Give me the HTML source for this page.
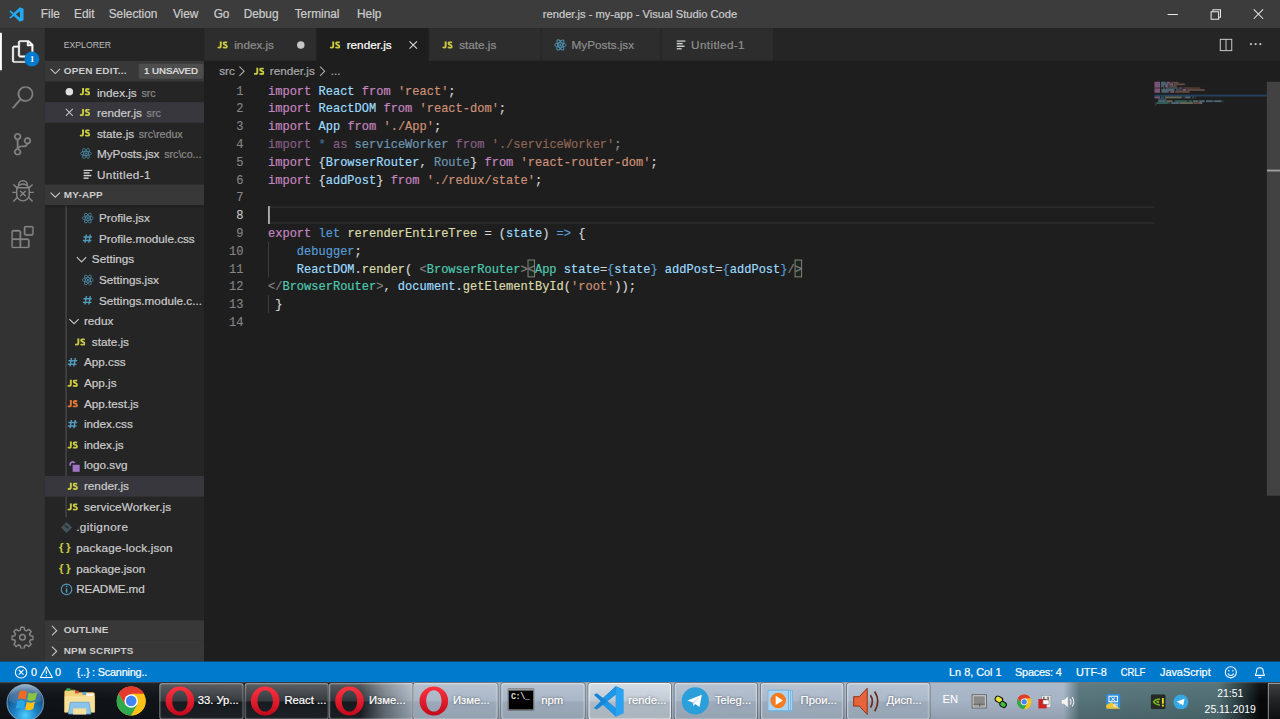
<!DOCTYPE html>
<html>
<head>
<meta charset="utf-8">
<title>render.js - my-app - Visual Studio Code</title>
<style>
*{box-sizing:border-box;margin:0;padding:0}
html,body{width:1280px;height:719px;overflow:hidden;background:#1e1e1e;font-family:"Liberation Sans",sans-serif}
body{font-family:"Liberation Sans",sans-serif;}
#root{position:absolute;left:0;top:0;width:1366px;height:768px;transform-origin:0 0;transform:scale(0.93704);background:#1e1e1e;color:#ccc;font-size:13px;overflow:hidden}
.abs{position:absolute}
/* title bar */
#title{position:absolute;left:0;top:0;width:1366px;height:30px;background:#3c3c3c;color:#ccc}
#title .m{position:absolute;top:0;height:30px;line-height:30px;font-size:12.65px;white-space:nowrap}
#wtitle{position:absolute;left:0;width:1366px;text-align:center;top:0;height:30px;line-height:30px;font-size:11.9px;white-space:nowrap}
/* activity bar */
#act{position:absolute;left:0;top:30px;width:48px;height:676px;background:#333}
#act svg{position:absolute;left:12px}
/* sidebar */
#side{position:absolute;left:48px;top:30px;width:170px;height:676px;background:#252526;overflow:hidden}
.hdr{position:absolute;left:0;width:170px;height:22px;background:#383838;color:#ccc;font-weight:bold;font-size:10.6px;letter-spacing:.2px;line-height:20.8px;white-space:nowrap}
.row{position:absolute;left:0;width:170px;height:22px;line-height:22px;font-size:12.5px;color:#ccc;white-space:nowrap;overflow:hidden}
.row .t{position:absolute;top:.8px}
.row .d{font-size:11.4px;color:#8b8b8b;margin-left:5px}
.sel{background:#37373d}
.ic{position:absolute;top:3px;width:16px;height:16px}
.jsi{position:absolute;top:7.3px}
.tab .jsi{top:13.8px}
.hash{position:absolute;top:-.5px;font-size:15.5px;font-weight:bold;font-style:italic;color:#519aba;margin-left:-1px}
.br{position:absolute;top:-1px;font-size:12.5px;font-weight:bold;color:#cbcb41;letter-spacing:2.6px}
/* editor */
#tabs{position:absolute;left:218px;top:30px;width:1148px;height:35px;background:#252526}
.tab{position:absolute;top:0;height:35px;width:120px;background:#2d2d2d;border-right:1px solid #252526;color:#8f8f8f;font-size:12.5px;line-height:36.6px;white-space:nowrap}
.tab.on{background:#1e1e1e;color:#fff}
.tab .t{position:absolute;left:32px;top:0}
#crumbs{position:absolute;left:218px;top:65px;width:1148px;height:22px;background:#1e1e1e;color:#a9a9a9;font-size:12.5px;line-height:22px;white-space:nowrap}
#ed{position:absolute;left:218px;top:87px;width:1148px;height:619px;background:#1e1e1e;overflow:hidden}
.ln{position:absolute;left:0;width:41.8px;margin-top:.7px;text-align:right;height:19px;line-height:19px;-webkit-text-stroke:.15px currentColor;font-family:"Liberation Mono",monospace;font-size:12.83px;color:#858585}
.cl{position:absolute;left:68px;margin-top:.7px;height:19px;line-height:19px;-webkit-text-stroke:.2px currentColor;font-family:"Liberation Mono",monospace;font-size:12.83px;color:#d4d4d4;white-space:pre}
.k{color:#c586c0}.v{color:#9cdcfe}.s{color:#ce9178}.b{color:#569cd6}.f{color:#dcdcaa}.g{color:#4ec9b0}.p{color:#808080}
/* status */
#status{position:absolute;left:0;top:706px;width:1366px;height:22px;background:#007acc;color:#fff;font-size:11.6px;line-height:22px;white-space:nowrap}
#status .t{position:absolute;top:0}
/* taskbar */
#task{position:absolute;left:0;top:728px;width:1366px;height:40px;background:#1a1f26;overflow:hidden}
.tb{position:absolute;top:1px;height:39px;border-radius:3px;border:1px solid rgba(255,255,255,0.45);box-shadow:inset 0 0 0 1px rgba(255,255,255,0.12), 0 0 0 1px rgba(0,0,0,0.38)}
.tb.dk{background:linear-gradient(180deg,rgba(255,255,255,.27) 0,rgba(255,255,255,.17) 48%,rgba(255,255,255,.03) 52%,rgba(255,255,255,.06) 100%)}
.tb.dk2{background:linear-gradient(180deg,rgba(255,255,255,.25) 0,rgba(255,255,255,.14) 48%,rgba(255,255,255,.02) 52%,rgba(255,255,255,.05) 100%)}
.tb.lt{background:linear-gradient(180deg,rgba(255,255,255,.16) 0,rgba(255,255,255,.07) 48%,rgba(0,0,0,.03) 52%,rgba(255,255,255,.04) 100%)}
.tb.ac{background:linear-gradient(180deg,rgba(255,255,255,.5) 0,rgba(255,255,255,.33) 48%,rgba(225,225,215,.2) 52%,rgba(235,235,225,.3) 100%);border-color:rgba(255,255,255,.8)}
.tl{position:absolute;top:0;height:40px;line-height:38px;color:#fff;font-size:12px;white-space:nowrap;text-shadow:0 0 3px rgba(0,0,0,0.6)}
.row .t,.tab .t,#crumbs span,#title .m,#wtitle,#status .t,.tl{-webkit-text-stroke:.22px currentColor}
</style>
</head>
<body>
<div id="root">
<div id="title">
<svg class="abs" style="left:9px;top:6.5px" width="17" height="17" viewBox="0 0 100 100"><path d="M72 4L95 14V86L72 96L33 60L14 75L5 70L26 50L5 30L14 25L33 40ZM72 29L46 50L72 71Z" fill="#23a9f2" fill-rule="evenodd"/></svg>
<span class="m" style="left:43.5px">File</span>
<span class="m" style="left:79px">Edit</span>
<span class="m" style="left:116px">Selection</span>
<span class="m" style="left:184.5px">View</span>
<span class="m" style="left:228px">Go</span>
<span class="m" style="left:260px">Debug</span>
<span class="m" style="left:314.5px">Terminal</span>
<span class="m" style="left:381px">Help</span>
<div id="wtitle">render.js - my-app - Visual Studio Code</div>
<svg class="abs" style="left:1228px;top:0" width="138" height="30" viewBox="0 0 138 30" fill="none" stroke="#e8e8e8" stroke-width="1.1">
<path d="M18 15.5 H29"/>
<path d="M64.5 12.5 H72.5 V20.5 H64.5 Z"/><path d="M66.5 12.5 V10.5 H74.5 V18.5 H72.5"/>
<path d="M110 10 L120 20 M120 10 L110 20"/>
</svg>
</div>
<div id="act">
<div class="abs" style="left:0;top:5px;width:2px;height:40px;background:#fff"></div>
<svg style="top:12.5px;left:11.5px" width="25.5" height="24" preserveAspectRatio="none" viewBox="0 0 24 24" fill="#fff" stroke="#fff" stroke-width=".55"><path d="M17.5 0h-9L7 1.5V6H2.5L1 7.5v15.07L2.5 24h12.07L16 22.57V18h4.7l1.3-1.43V4.5L17.5 0zm0 2.12l2.38 2.38H17.5V2.12zm-3 20.38h-12v-15H7v9.07L8.5 18h6v4.5zm6-6h-12v-15H16V6h4.5v10.5z"/></svg>
<div class="abs" style="left:26.4px;top:24.8px;width:16px;height:16px;border-radius:8px;background:#007acc;color:#fff;font-size:9px;font-weight:bold;text-align:center;line-height:16px;font-family:'Liberation Serif',serif">1</div>
<svg style="top:62.3px" width="24" height="24" viewBox="0 0 24 24" fill="#858585" stroke="#858585" stroke-width=".4"><path d="M15.25 0a8.25 8.25 0 0 0-6.18 13.72L1 22.88l1.12 1.12 8.05-9.12A8.251 8.251 0 1 0 15.25.01V0zm0 15a6.75 6.75 0 1 1 0-13.5 6.75 6.75 0 0 1 0 13.5z"/></svg>
<svg style="top:111.8px" width="24" height="24" viewBox="0 0 24 24" fill="#858585" stroke="#858585" stroke-width=".4"><path d="M21.007 8.222A3.738 3.738 0 0 0 15.045 5.2a3.737 3.737 0 0 0 1.156 6.583 2.988 2.988 0 0 1-2.668 1.67h-2.99a4.456 4.456 0 0 0-2.989 1.165V7.4a3.737 3.737 0 1 0-1.494 0v9.117a3.776 3.776 0 1 0 1.816.099 2.99 2.99 0 0 1 2.668-1.667h2.99a4.484 4.484 0 0 0 4.223-3.039 3.736 3.736 0 0 0 3.25-3.687zM4.565 3.738a2.242 2.242 0 1 1 4.484 0 2.242 2.242 0 0 1-4.484 0zm4.484 16.441a2.242 2.242 0 1 1-4.484 0 2.242 2.242 0 0 1 4.484 0zm8.221-9.715a2.242 2.242 0 1 1 0-4.485 2.242 2.242 0 0 1 0 4.485z"/></svg>
<svg style="top:158.5px;left:9.5px" width="29" height="29" viewBox="0 0 24 24" fill="none" stroke="#858585" stroke-width="1.3"><path d="M6.5 11.5a5.5 5.5 0 0 1 11 0v4a5.5 5.5 0 0 1-11 0z"/><path d="M8 7.2A4 4 0 0 1 16 7.2"/><path d="M6.5 9.5H17.5"/><path d="M9.5 12L14.5 17M14.5 12L9.5 17"/><path d="M6.5 13.5H2.5M17.5 13.5H21.5M6.8 9.5L3.5 6.5M17.2 9.5L20.5 6.5M7 18L3.5 21.5M17 18L20.5 21.5"/></svg>
<svg style="top:211.3px" width="24" height="24" viewBox="0 0 24 24" fill="#858585" stroke="#858585" stroke-width=".4"><path d="M13.5 1.5L15 0h7.5L24 1.5V9l-1.5 1.5H15L13.5 9V1.5zm1.5 0V9h7.5V1.5H15zM0 15V6l1.5-1.5H9L10.5 6v7.5H18l1.5 1.5v7.5L18 24H1.5L0 22.5V15zm9-1.5V6H1.5v7.5H9zM9 15H1.5v7.5H9V15zm1.5 7.5H18V15h-7.5v7.5z"/></svg>
<svg style="top:638px" width="24" height="24" viewBox="0 0 24 24" fill="none" stroke="#858585" stroke-width="1.6" stroke-linejoin="round"><circle cx="12" cy="12" r="3"/><path d="M10.3 1.5h3.4l.6 3 1.9.8 2.6-1.7 2.4 2.4-1.7 2.6.8 1.9 3 .6v3.4l-3 .6-.8 1.9 1.7 2.6-2.4 2.4-2.6-1.7-1.9.8-.6 3h-3.4l-.6-3-1.9-.8-2.6 1.7-2.4-2.4 1.7-2.6-.8-1.9-3-.6v-3.4l3-.6.8-1.9-1.7-2.6 2.4-2.4 2.6 1.7 1.9-.8z"/></svg>
</div>
<div id="side">
<div class="abs" style="left:20px;top:0;height:35px;line-height:35px;font-size:10.6px;color:#bbb;transform-origin:0 0;transform:scaleX(.875)">EXPLORER</div>
<div class="hdr" style="top:35px"><svg class="ic" style="left:3px" viewBox="0 0 16 16" fill="none" stroke="#c5c5c5" stroke-width="1.2"><path d="M3 5.5L8 10.5L13 5.5"/></svg><span class="abs" style="left:20px">OPEN EDIT...</span><span class="abs" style="left:100px;top:3px;width:69px;height:16px;line-height:16px;background:#4d4d4d;color:#e8e8e8;border-radius:2px;text-align:center;font-size:10.3px;font-weight:normal;letter-spacing:0;-webkit-text-stroke:.25px currentColor">1 UNSAVED</span></div>
<div class="row" style="top:57px"><div class="abs" style="left:22px;top:7px;width:8px;height:8px;border-radius:4px;background:#e0e0e0"></div><svg class="jsi" style="left:37.4px" width="11" height="7.9" preserveAspectRatio="none" viewBox="0 0 11 8.5" fill="none" stroke="#cbcb41" stroke-width="2.05"><path d="M3.6 0V5.5Q3.6 7.4 1.9 7.4Q.9 7.4 .1 6.9"/><path d="M10.5 1.4Q9.3 1 8.3 1Q6.6 1 6.600000 2.4Q6.6 3.5 8.4 4.1Q10.3 4.7 10.3 6Q10.3 7.5 8.3 7.5Q7 7.5 5.9 6.9"/></svg><span class="t" style="left:55.5px">index.js<span class="d">src</span></span></div>
<div class="row sel" style="top:79px"><svg class="ic" style="left:18px" viewBox="0 0 16 16" fill="none" stroke="#c5c5c5" stroke-width="1.1"><path d="M4.300000 4.3L11.700000 11.7M11.7 4.3L4.3 11.7"/></svg><svg class="jsi" style="left:37.4px" width="11" height="7.9" preserveAspectRatio="none" viewBox="0 0 11 8.5" fill="none" stroke="#cbcb41" stroke-width="2.05"><path d="M3.6 0V5.5Q3.6 7.4 1.9 7.4Q.9 7.4 .1 6.9"/><path d="M10.5 1.4Q9.3 1 8.3 1Q6.6 1 6.600000 2.4Q6.6 3.5 8.4 4.1Q10.3 4.7 10.3 6Q10.3 7.5 8.3 7.5Q7 7.5 5.9 6.9"/></svg><span class="t" style="left:55.5px">render.js<span class="d">src</span></span></div>
<div class="row" style="top:101px"><svg class="jsi" style="left:37.4px" width="11" height="7.9" preserveAspectRatio="none" viewBox="0 0 11 8.5" fill="none" stroke="#cbcb41" stroke-width="2.05"><path d="M3.6 0V5.5Q3.6 7.4 1.9 7.4Q.9 7.4 .1 6.9"/><path d="M10.5 1.4Q9.3 1 8.3 1Q6.6 1 6.600000 2.4Q6.6 3.5 8.4 4.1Q10.3 4.7 10.3 6Q10.3 7.5 8.3 7.5Q7 7.5 5.9 6.9"/></svg><span class="t" style="left:55.5px">state.js<span class="d">src\redux</span></span></div>
<div class="row" style="top:123px"><svg class="ic" style="left:36.8px;top:4.3px;width:13.5px;height:13.5px;opacity:.88" viewBox="0 0 16 16" fill="none" stroke="#519aba" stroke-width="1"><ellipse cx="8" cy="8" rx="7" ry="2.7"/><ellipse cx="8" cy="8" rx="7" ry="2.7" transform="rotate(60 8 8)"/><ellipse cx="8" cy="8" rx="7" ry="2.7" transform="rotate(120 8 8)"/><circle cx="8" cy="8" r="1.3" fill="#519aba" stroke="none"/></svg><span class="t" style="left:55.5px">MyPosts.jsx<span class="d">src\co...</span></span></div>
<div class="row" style="top:145px"><svg class="abs" style="left:41px;top:6px" width="10" height="10" viewBox="0 0 10 10" fill="#d4d7d6"><rect x="0" y="0" width="9.5" height="1.5"/><rect x="0" y="2.8" width="6.5" height="1.5"/><rect x="0" y="5.6" width="8.5" height="1.5"/><rect x="0" y="8.4" width="5.5" height="1.5"/></svg><span class="t" style="left:55.5px;letter-spacing:.4px">Untitled-1</span></div>
<div class="hdr" style="top:167px;z-index:2;box-shadow:0 3px 3px -1px rgba(0,0,0,0.45)"><svg class="ic" style="left:3px" viewBox="0 0 16 16" fill="none" stroke="#c5c5c5" stroke-width="1.2"><path d="M3 5.5L8 10.5L13 5.5"/></svg><span class="abs" style="left:20px">MY-APP</span></div>
<div class="abs" style="left:0;top:189px;width:170px;height:440px;overflow:hidden">
<div class="abs" style="left:22px;top:0;width:1px;height:332.6px;background:#585858"></div>
<div class="row" style="top:2.6px"><svg class="ic" style="left:38.7px;top:4.3px;width:13.5px;height:13.5px;opacity:.88" viewBox="0 0 16 16" fill="none" stroke="#519aba" stroke-width="1"><ellipse cx="8" cy="8" rx="7" ry="2.7"/><ellipse cx="8" cy="8" rx="7" ry="2.7" transform="rotate(60 8 8)"/><ellipse cx="8" cy="8" rx="7" ry="2.7" transform="rotate(120 8 8)"/><circle cx="8" cy="8" r="1.3" fill="#519aba" stroke="none"/></svg><span class="t" style="left:57.7px">Profile.jsx</span></div>
<div class="row" style="top:24.6px"><svg class="abs" style="left:39.5px;top:6.3px" width="10.5" height="9.6" viewBox="0 0 10.5 9.6" fill="none" stroke="#519aba" stroke-width="1.55"><path d="M4.300000 0L2.6 9.6M8.4 0L6.7 9.6M1 2.9H10.4M.2 6.700000H9.600000"/></svg><span class="t" style="left:57.7px">Profile.module.css</span></div>
<div class="row" style="top:46.6px"><svg class="ic" style="left:31.2px" viewBox="0 0 16 16" fill="none" stroke="#c5c5c5" stroke-width="1.2"><path d="M3 5.5L8 10.5L13 5.5"/></svg><span class="t" style="left:50px">Settings</span></div>
<div class="row" style="top:68.6px"><svg class="ic" style="left:38.7px;top:4.3px;width:13.5px;height:13.5px;opacity:.88" viewBox="0 0 16 16" fill="none" stroke="#519aba" stroke-width="1"><ellipse cx="8" cy="8" rx="7" ry="2.7"/><ellipse cx="8" cy="8" rx="7" ry="2.7" transform="rotate(60 8 8)"/><ellipse cx="8" cy="8" rx="7" ry="2.7" transform="rotate(120 8 8)"/><circle cx="8" cy="8" r="1.3" fill="#519aba" stroke="none"/></svg><span class="t" style="left:57.7px">Settings.jsx</span></div>
<div class="row" style="top:90.6px"><svg class="abs" style="left:39.5px;top:6.3px" width="10.5" height="9.6" viewBox="0 0 10.5 9.6" fill="none" stroke="#519aba" stroke-width="1.55"><path d="M4.300000 0L2.6 9.6M8.4 0L6.7 9.6M1 2.9H10.4M.2 6.700000H9.600000"/></svg><span class="t" style="left:57.7px">Settings.module.c...</span></div>
<div class="row" style="top:112.6px"><svg class="ic" style="left:22.5px" viewBox="0 0 16 16" fill="none" stroke="#c5c5c5" stroke-width="1.2"><path d="M3 5.5L8 10.5L13 5.5"/></svg><span class="t" style="left:41.6px">redux</span></div>
<div class="row" style="top:134.6px"><svg class="jsi" style="left:32px" width="11" height="7.9" preserveAspectRatio="none" viewBox="0 0 11 8.5" fill="none" stroke="#cbcb41" stroke-width="2.05"><path d="M3.6 0V5.5Q3.6 7.4 1.9 7.4Q.9 7.4 .1 6.9"/><path d="M10.5 1.4Q9.3 1 8.3 1Q6.6 1 6.600000 2.4Q6.6 3.5 8.4 4.1Q10.3 4.7 10.3 6Q10.3 7.5 8.3 7.5Q7 7.5 5.9 6.9"/></svg><span class="t" style="left:50px">state.js</span></div>
<div class="row" style="top:156.6px"><svg class="abs" style="left:24.0px;top:6.3px" width="10.5" height="9.6" viewBox="0 0 10.5 9.6" fill="none" stroke="#519aba" stroke-width="1.55"><path d="M4.300000 0L2.6 9.6M8.4 0L6.7 9.6M1 2.9H10.4M.2 6.700000H9.600000"/></svg><span class="t" style="left:41.6px">App.css</span></div>
<div class="row" style="top:178.6px"><svg class="jsi" style="left:23.6px" width="11" height="7.9" preserveAspectRatio="none" viewBox="0 0 11 8.5" fill="none" stroke="#cbcb41" stroke-width="2.05"><path d="M3.6 0V5.5Q3.6 7.4 1.9 7.4Q.9 7.4 .1 6.9"/><path d="M10.5 1.4Q9.3 1 8.3 1Q6.6 1 6.600000 2.4Q6.6 3.5 8.4 4.1Q10.3 4.7 10.3 6Q10.3 7.5 8.3 7.5Q7 7.5 5.9 6.9"/></svg><span class="t" style="left:41.6px">App.js</span></div>
<div class="row" style="top:200.6px"><svg class="jsi" style="left:23.6px" width="11" height="7.9" preserveAspectRatio="none" viewBox="0 0 11 8.5" fill="none" stroke="#e37933" stroke-width="2.05"><path d="M3.6 0V5.5Q3.6 7.4 1.9 7.4Q.9 7.4 .1 6.9"/><path d="M10.5 1.4Q9.3 1 8.3 1Q6.6 1 6.600000 2.4Q6.6 3.5 8.4 4.1Q10.3 4.7 10.3 6Q10.3 7.5 8.3 7.5Q7 7.5 5.9 6.9"/></svg><span class="t" style="left:41.6px">App.test.js</span></div>
<div class="row" style="top:222.6px"><svg class="abs" style="left:24.0px;top:6.3px" width="10.5" height="9.6" viewBox="0 0 10.5 9.6" fill="none" stroke="#519aba" stroke-width="1.55"><path d="M4.300000 0L2.6 9.6M8.4 0L6.7 9.6M1 2.9H10.4M.2 6.700000H9.600000"/></svg><span class="t" style="left:41.6px">index.css</span></div>
<div class="row" style="top:244.6px"><svg class="jsi" style="left:23.6px" width="11" height="7.9" preserveAspectRatio="none" viewBox="0 0 11 8.5" fill="none" stroke="#cbcb41" stroke-width="2.05"><path d="M3.6 0V5.5Q3.6 7.4 1.9 7.4Q.9 7.4 .1 6.9"/><path d="M10.5 1.4Q9.3 1 8.3 1Q6.6 1 6.600000 2.4Q6.6 3.5 8.4 4.1Q10.3 4.7 10.3 6Q10.3 7.5 8.3 7.5Q7 7.5 5.9 6.9"/></svg><span class="t" style="left:41.6px">index.js</span></div>
<div class="row" style="top:266.6px"><svg class="ic" style="left:24px" viewBox="0 0 16 16"><path d="M2 6.5A3.5 3.5 0 0 1 8.5 4.7L6.8 5.6A1.7 1.7 0 0 0 3.8 6.5V8H2z" fill="#a074c4"/><rect x="5.5" y="7" width="7.5" height="7.5" fill="#a074c4"/></svg><span class="t" style="left:41.6px">logo.svg</span></div>
<div class="row sel" style="top:288.6px"><svg class="jsi" style="left:23.6px" width="11" height="7.9" preserveAspectRatio="none" viewBox="0 0 11 8.5" fill="none" stroke="#cbcb41" stroke-width="2.05"><path d="M3.6 0V5.5Q3.6 7.4 1.9 7.4Q.9 7.4 .1 6.9"/><path d="M10.5 1.4Q9.3 1 8.3 1Q6.6 1 6.600000 2.4Q6.6 3.5 8.4 4.1Q10.3 4.7 10.3 6Q10.3 7.5 8.3 7.5Q7 7.5 5.9 6.9"/></svg><span class="t" style="left:41.6px">render.js</span></div>
<div class="row" style="top:310.6px"><svg class="jsi" style="left:23.6px" width="11" height="7.9" preserveAspectRatio="none" viewBox="0 0 11 8.5" fill="none" stroke="#cbcb41" stroke-width="2.05"><path d="M3.6 0V5.5Q3.6 7.4 1.9 7.4Q.9 7.4 .1 6.9"/><path d="M10.5 1.4Q9.3 1 8.3 1Q6.6 1 6.600000 2.4Q6.6 3.5 8.4 4.1Q10.3 4.7 10.3 6Q10.3 7.5 8.3 7.5Q7 7.5 5.9 6.9"/></svg><span class="t" style="left:41.6px;letter-spacing:.1px">serviceWorker.js</span></div>
<div class="row" style="top:332.6px"><svg class="ic" style="left:14.6px" viewBox="0 0 16 16"><rect x="3.8" y="3.8" width="8.4" height="8.4" transform="rotate(45 8 8)" fill="#41535b"/><path d="M6 5.5L9.5 9M8 7.5H10" stroke="#252526" stroke-width="1.1" fill="none"/></svg><span class="t" style="left:33.3px;letter-spacing:.42px">.gitignore</span></div>
<div class="row" style="top:354.6px"><span class="br" style="left:15px">{}</span><span class="t" style="left:33.3px;letter-spacing:.18px">package-lock.json</span></div>
<div class="row" style="top:376.6px"><span class="br" style="left:15px">{}</span><span class="t" style="left:33.3px">package.json</span></div>
<div class="row" style="top:398.6px"><svg class="ic" style="left:14.8px" viewBox="0 0 16 16" fill="none" stroke="#519aba" stroke-width="1.2"><circle cx="8" cy="8" r="5.6"/><path d="M8 7V11.5M8 4.2V5.6" stroke-width="1.6"/></svg><span class="t" style="left:33.3px;letter-spacing:-.15px">README.md</span></div>
</div>
<div class="hdr" style="top:632px"><svg class="ic" style="left:1.8px" viewBox="0 0 16 16" fill="none" stroke="#c5c5c5" stroke-width="1.2"><path d="M5.5 3L10.5 8L5.5 13"/></svg><span class="abs" style="left:20px">OUTLINE</span></div>
<div class="hdr" style="top:654px"><svg class="ic" style="left:1.8px" viewBox="0 0 16 16" fill="none" stroke="#c5c5c5" stroke-width="1.2"><path d="M5.5 3L10.5 8L5.5 13"/></svg><span class="abs" style="left:20px">NPM SCRIPTS</span></div>
</div>
<div id="tabs">
<div class="tab" style="left:0"><svg class="jsi" style="left:14px" width="11" height="7.9" preserveAspectRatio="none" viewBox="0 0 11 8.5" fill="none" stroke="#cbcb41" stroke-width="2.05"><path d="M3.6 0V5.5Q3.6 7.4 1.9 7.4Q.9 7.4 .1 6.9"/><path d="M10.5 1.4Q9.3 1 8.3 1Q6.6 1 6.600000 2.4Q6.6 3.5 8.4 4.1Q10.3 4.7 10.3 6Q10.3 7.5 8.3 7.5Q7 7.5 5.9 6.9"/></svg><span class="t">index.js</span><div class="abs" style="left:99px;top:13.5px;width:8px;height:8px;border-radius:4px;background:#c5c5c5"></div></div>
<div class="tab on" style="left:120px"><svg class="jsi" style="left:14px" width="11" height="7.9" preserveAspectRatio="none" viewBox="0 0 11 8.5" fill="none" stroke="#cbcb41" stroke-width="2.05"><path d="M3.6 0V5.5Q3.6 7.4 1.9 7.4Q.9 7.4 .1 6.9"/><path d="M10.5 1.4Q9.3 1 8.3 1Q6.6 1 6.600000 2.4Q6.6 3.5 8.4 4.1Q10.3 4.7 10.3 6Q10.3 7.5 8.3 7.5Q7 7.5 5.9 6.9"/></svg><span class="t">render.js</span><svg class="abs" style="left:95px;top:9.5px" width="16" height="16" viewBox="0 0 16 16" fill="none" stroke="#e0e0e0" stroke-width="1.2"><path d="M3.6 3.6L12.4 12.4M12.4 3.6L3.6 12.4" transform="translate(8 8) scale(.9) translate(-8 -8)"/></svg></div>
<div class="tab" style="left:240px"><svg class="jsi" style="left:14px" width="11" height="7.9" preserveAspectRatio="none" viewBox="0 0 11 8.5" fill="none" stroke="#cbcb41" stroke-width="2.05"><path d="M3.6 0V5.5Q3.6 7.4 1.9 7.4Q.9 7.4 .1 6.9"/><path d="M10.5 1.4Q9.3 1 8.3 1Q6.6 1 6.600000 2.4Q6.6 3.5 8.4 4.1Q10.3 4.7 10.3 6Q10.3 7.5 8.3 7.5Q7 7.5 5.9 6.9"/></svg><span class="t">state.js</span></div>
<div class="tab" style="left:360px;width:127.5px"><svg class="abs" style="left:13px;top:10.5px" width="14" height="14" viewBox="0 0 16 16" fill="none" stroke="#519aba" stroke-width="1.1"><ellipse cx="8" cy="8" rx="7" ry="2.7"/><ellipse cx="8" cy="8" rx="7" ry="2.7" transform="rotate(60 8 8)"/><ellipse cx="8" cy="8" rx="7" ry="2.7" transform="rotate(120 8 8)"/><circle cx="8" cy="8" r="1.3" fill="#519aba" stroke="none"/></svg><span class="t">MyPosts.jsx</span></div>
<div class="tab" style="left:487.5px"><svg class="abs" style="left:16.5px;top:13px" width="10" height="10" viewBox="0 0 10 10" fill="#d4d7d6"><rect x="0" y="0" width="9.5" height="1.5"/><rect x="0" y="2.8" width="6.5" height="1.5"/><rect x="0" y="5.6" width="8.5" height="1.5"/><rect x="0" y="8.4" width="5.5" height="1.5"/></svg><span class="t" style="letter-spacing:.4px">Untitled-1</span></div>
<svg class="abs" style="left:1082px;top:9.5px" width="16" height="16" viewBox="0 0 16 16" fill="none" stroke="#c5c5c5" stroke-width="1.1"><rect x="2.3" y="2" width="12.2" height="12"/><path d="M8.4 2V14"/></svg>
<svg class="abs" style="left:1114.2px;top:8.5px" width="16" height="16" viewBox="0 0 16 16" fill="#c5c5c5"><circle cx="3" cy="8" r="1.2"/><circle cx="8" cy="8" r="1.2"/><circle cx="13" cy="8" r="1.2"/></svg>
</div>
<div id="crumbs">
<span class="abs" style="left:16px">src</span>
<svg class="abs" style="left:32px;top:3px" width="16" height="16" viewBox="0 0 16 16" fill="none" stroke="#a9a9a9" stroke-width="1.2"><path d="M5.5 3L10.5 8L5.5 13"/></svg>
<svg class="jsi" style="left:53px" width="11" height="7.9" preserveAspectRatio="none" viewBox="0 0 11 8.5" fill="none" stroke="#cbcb41" stroke-width="2.05"><path d="M3.6 0V5.5Q3.6 7.4 1.9 7.4Q.9 7.4 .1 6.9"/><path d="M10.5 1.4Q9.3 1 8.3 1Q6.6 1 6.600000 2.4Q6.6 3.5 8.4 4.1Q10.3 4.7 10.3 6Q10.3 7.5 8.3 7.5Q7 7.5 5.9 6.9"/></svg>
<span class="abs" style="left:70px">render.js</span>
<svg class="abs" style="left:117.8px;top:3px" width="16" height="16" viewBox="0 0 16 16" fill="none" stroke="#a9a9a9" stroke-width="1.2"><path d="M5.5 3L10.5 8L5.5 13"/></svg>
<span class="abs" style="left:135px">...</span>
</div>
<div id="ed">
<div class="abs" style="left:68px;top:132.5px;width:946px;height:19px;border-top:2px solid #2a2a2a;border-bottom:2px solid #2a2a2a"></div>
<div class="abs" style="left:68px;top:133px;width:2px;height:19px;background:#aeafad"></div>
<div class="abs" style="left:68px;top:171px;width:1px;height:38px;background:#404040"></div>
<div class="abs" style="left:68px;top:228px;width:1px;height:19px;background:#404040"></div>
<div class="abs" style="left:344.9px;top:190px;width:8.3px;height:19px;border:1px solid #888;background:rgba(0,100,0,.12)"></div>
<div class="abs" style="left:629.8px;top:190px;width:8.3px;height:19px;border:1px solid #888;background:rgba(0,100,0,.12)"></div>
<div class="ln" style="top:0px;color:#858585">1</div><div class="cl" style="top:0px"><span class="k">import</span> <span class="v">React</span> <span class="k">from</span> <span class="s">'react'</span>;</div>
<div class="ln" style="top:19px;color:#858585">2</div><div class="cl" style="top:19px"><span class="k">import</span> <span class="v">ReactDOM</span> <span class="k">from</span> <span class="s">'react-dom'</span>;</div>
<div class="ln" style="top:38px;color:#858585">3</div><div class="cl" style="top:38px"><span class="k">import</span> <span class="v">App</span> <span class="k">from</span> <span class="s">'./App'</span>;</div>
<div class="ln" style="top:57px;color:#858585">4</div><div class="cl" style="top:57px"><span style="opacity:.62"><span class="k">import</span> <span class="b">*</span> <span class="k">as</span> <span class="v">serviceWorker</span> <span class="k">from</span> <span class="s">'./serviceWorker'</span>;</span></div>
<div class="ln" style="top:76px;color:#858585">5</div><div class="cl" style="top:76px"><span class="k">import</span> {<span class="v">BrowserRouter</span>, <span class="v" style="opacity:.62">Route</span>} <span class="k">from</span> <span class="s">'react-router-dom'</span>;</div>
<div class="ln" style="top:95px;color:#858585">6</div><div class="cl" style="top:95px"><span class="k">import</span> {<span class="v">addPost</span>} <span class="k">from</span> <span class="s">'./redux/state'</span>;</div>
<div class="ln" style="top:114px;color:#858585">7</div><div class="cl" style="top:114px"></div>
<div class="ln" style="top:133px;color:#c6c6c6">8</div><div class="cl" style="top:133px"></div>
<div class="ln" style="top:152px;color:#858585">9</div><div class="cl" style="top:152px"><span class="k">export</span> <span class="b">let</span> <span class="f">rerenderEntireTree</span> = (<span class="v">state</span>) <span class="b">=&gt;</span> {</div>
<div class="ln" style="top:171px;color:#858585">10</div><div class="cl" style="top:171px">    <span class="b">debugger</span>;</div>
<div class="ln" style="top:190px;color:#858585">11</div><div class="cl" style="top:190px">    <span class="v">ReactDOM</span>.<span class="f">render</span>( <span class="p">&lt;</span><span class="g">BrowserRouter</span><span class="p">&gt;</span><span class="p">&lt;</span><span class="g">App</span> <span class="v">state</span>=<span class="b">{</span><span class="v">state</span><span class="b">}</span> <span class="v">addPost</span>=<span class="b">{</span><span class="v">addPost</span><span class="b">}</span><span class="p">/</span><span class="p">&gt;</span></div>
<div class="ln" style="top:209px;color:#858585">12</div><div class="cl" style="top:209px"><span class="p">&lt;/</span><span class="g">BrowserRouter</span><span class="p">&gt;</span>, <span class="v">document</span>.<span class="f">getElementById</span>(<span class="s">'root'</span>));</div>
<div class="ln" style="top:228px;color:#858585">13</div><div class="cl" style="top:228px"> }</div>
<div class="ln" style="top:247px;color:#858585">14</div><div class="cl" style="top:247px"></div>
<div class="abs" style="left:1013.5px;top:0;width:120px;height:40px">
<div class="abs" style="left:0;top:14px;width:121px;height:2px;background:#23425f"></div>
<i style="position:absolute;left:0px;top:0.2px;width:6px;height:1.7px;background:#c586c0;opacity:0.56"></i><i style="position:absolute;left:7px;top:0.2px;width:5px;height:1.7px;background:#9cdcfe;opacity:0.38"></i><i style="position:absolute;left:13px;top:0.2px;width:4px;height:1.7px;background:#c586c0;opacity:0.56"></i><i style="position:absolute;left:18px;top:0.2px;width:7px;height:1.7px;background:#ce9178;opacity:0.38"></i><i style="position:absolute;left:25px;top:0.2px;width:1px;height:1.7px;background:#d4d4d4;opacity:0.21"></i>
<i style="position:absolute;left:0px;top:2.2px;width:6px;height:1.7px;background:#c586c0;opacity:0.56"></i><i style="position:absolute;left:7px;top:2.2px;width:8px;height:1.7px;background:#9cdcfe;opacity:0.38"></i><i style="position:absolute;left:16px;top:2.2px;width:4px;height:1.7px;background:#c586c0;opacity:0.56"></i><i style="position:absolute;left:21px;top:2.2px;width:11px;height:1.7px;background:#ce9178;opacity:0.38"></i><i style="position:absolute;left:32px;top:2.2px;width:1px;height:1.7px;background:#d4d4d4;opacity:0.21"></i>
<i style="position:absolute;left:0px;top:4.2px;width:6px;height:1.7px;background:#c586c0;opacity:0.56"></i><i style="position:absolute;left:7px;top:4.2px;width:3px;height:1.7px;background:#9cdcfe;opacity:0.38"></i><i style="position:absolute;left:11px;top:4.2px;width:4px;height:1.7px;background:#c586c0;opacity:0.56"></i><i style="position:absolute;left:16px;top:4.2px;width:7px;height:1.7px;background:#ce9178;opacity:0.38"></i><i style="position:absolute;left:23px;top:4.2px;width:1px;height:1.7px;background:#d4d4d4;opacity:0.21"></i>
<i style="position:absolute;left:0px;top:6.2px;width:6px;height:1.7px;background:#c586c0;opacity:0.33"></i><i style="position:absolute;left:7px;top:6.2px;width:1px;height:1.7px;background:#569cd6;opacity:0.23"></i><i style="position:absolute;left:9px;top:6.2px;width:2px;height:1.7px;background:#c586c0;opacity:0.33"></i><i style="position:absolute;left:12px;top:6.2px;width:13px;height:1.7px;background:#9cdcfe;opacity:0.23"></i><i style="position:absolute;left:26px;top:6.2px;width:4px;height:1.7px;background:#c586c0;opacity:0.33"></i><i style="position:absolute;left:31px;top:6.2px;width:17px;height:1.7px;background:#ce9178;opacity:0.23"></i><i style="position:absolute;left:48px;top:6.2px;width:1px;height:1.7px;background:#d4d4d4;opacity:0.12"></i>
<i style="position:absolute;left:0px;top:8.2px;width:6px;height:1.7px;background:#c586c0;opacity:0.56"></i><i style="position:absolute;left:7px;top:8.2px;width:1px;height:1.7px;background:#d4d4d4;opacity:0.21"></i><i style="position:absolute;left:8px;top:8.2px;width:13px;height:1.7px;background:#9cdcfe;opacity:0.38"></i><i style="position:absolute;left:21px;top:8.2px;width:1px;height:1.7px;background:#d4d4d4;opacity:0.21"></i><i style="position:absolute;left:23px;top:8.2px;width:5px;height:1.7px;background:#9cdcfe;opacity:0.23"></i><i style="position:absolute;left:28px;top:8.2px;width:1px;height:1.7px;background:#d4d4d4;opacity:0.21"></i><i style="position:absolute;left:30px;top:8.2px;width:4px;height:1.7px;background:#c586c0;opacity:0.56"></i><i style="position:absolute;left:35px;top:8.2px;width:18px;height:1.7px;background:#ce9178;opacity:0.38"></i><i style="position:absolute;left:53px;top:8.2px;width:1px;height:1.7px;background:#d4d4d4;opacity:0.21"></i>
<i style="position:absolute;left:0px;top:10.2px;width:6px;height:1.7px;background:#c586c0;opacity:0.56"></i><i style="position:absolute;left:7px;top:10.2px;width:1px;height:1.7px;background:#d4d4d4;opacity:0.21"></i><i style="position:absolute;left:8px;top:10.2px;width:7px;height:1.7px;background:#9cdcfe;opacity:0.38"></i><i style="position:absolute;left:15px;top:10.2px;width:1px;height:1.7px;background:#d4d4d4;opacity:0.21"></i><i style="position:absolute;left:17px;top:10.2px;width:4px;height:1.7px;background:#c586c0;opacity:0.56"></i><i style="position:absolute;left:22px;top:10.2px;width:15px;height:1.7px;background:#ce9178;opacity:0.38"></i><i style="position:absolute;left:37px;top:10.2px;width:1px;height:1.7px;background:#d4d4d4;opacity:0.21"></i>


<i style="position:absolute;left:0px;top:16.2px;width:6px;height:1.7px;background:#c586c0;opacity:0.56"></i><i style="position:absolute;left:7px;top:16.2px;width:3px;height:1.7px;background:#569cd6;opacity:0.38"></i><i style="position:absolute;left:11px;top:16.2px;width:18px;height:1.7px;background:#dcdcaa;opacity:0.38"></i><i style="position:absolute;left:30px;top:16.2px;width:1px;height:1.7px;background:#d4d4d4;opacity:0.21"></i><i style="position:absolute;left:32px;top:16.2px;width:1px;height:1.7px;background:#d4d4d4;opacity:0.21"></i><i style="position:absolute;left:33px;top:16.2px;width:5px;height:1.7px;background:#9cdcfe;opacity:0.38"></i><i style="position:absolute;left:38px;top:16.2px;width:1px;height:1.7px;background:#d4d4d4;opacity:0.21"></i><i style="position:absolute;left:40px;top:16.2px;width:2px;height:1.7px;background:#569cd6;opacity:0.38"></i><i style="position:absolute;left:43px;top:16.2px;width:1px;height:1.7px;background:#d4d4d4;opacity:0.21"></i>
<i style="position:absolute;left:4px;top:18.2px;width:8px;height:1.7px;background:#569cd6;opacity:0.38"></i><i style="position:absolute;left:12px;top:18.2px;width:1px;height:1.7px;background:#d4d4d4;opacity:0.21"></i>
<i style="position:absolute;left:4px;top:20.2px;width:8px;height:1.7px;background:#9cdcfe;opacity:0.38"></i><i style="position:absolute;left:12px;top:20.2px;width:1px;height:1.7px;background:#d4d4d4;opacity:0.21"></i><i style="position:absolute;left:13px;top:20.2px;width:6px;height:1.7px;background:#dcdcaa;opacity:0.38"></i><i style="position:absolute;left:19px;top:20.2px;width:1px;height:1.7px;background:#d4d4d4;opacity:0.21"></i><i style="position:absolute;left:21px;top:20.2px;width:1px;height:1.7px;background:#808080;opacity:0.21"></i><i style="position:absolute;left:22px;top:20.2px;width:13px;height:1.7px;background:#4ec9b0;opacity:0.38"></i><i style="position:absolute;left:35px;top:20.2px;width:1px;height:1.7px;background:#808080;opacity:0.21"></i><i style="position:absolute;left:36px;top:20.2px;width:1px;height:1.7px;background:#808080;opacity:0.21"></i><i style="position:absolute;left:37px;top:20.2px;width:3px;height:1.7px;background:#4ec9b0;opacity:0.38"></i><i style="position:absolute;left:41px;top:20.2px;width:5px;height:1.7px;background:#9cdcfe;opacity:0.38"></i><i style="position:absolute;left:46px;top:20.2px;width:1px;height:1.7px;background:#d4d4d4;opacity:0.21"></i><i style="position:absolute;left:47px;top:20.2px;width:1px;height:1.7px;background:#569cd6;opacity:0.38"></i><i style="position:absolute;left:48px;top:20.2px;width:5px;height:1.7px;background:#9cdcfe;opacity:0.38"></i><i style="position:absolute;left:53px;top:20.2px;width:1px;height:1.7px;background:#569cd6;opacity:0.38"></i><i style="position:absolute;left:55px;top:20.2px;width:7px;height:1.7px;background:#9cdcfe;opacity:0.38"></i><i style="position:absolute;left:62px;top:20.2px;width:1px;height:1.7px;background:#d4d4d4;opacity:0.21"></i><i style="position:absolute;left:63px;top:20.2px;width:1px;height:1.7px;background:#569cd6;opacity:0.38"></i><i style="position:absolute;left:64px;top:20.2px;width:7px;height:1.7px;background:#9cdcfe;opacity:0.38"></i><i style="position:absolute;left:71px;top:20.2px;width:1px;height:1.7px;background:#569cd6;opacity:0.38"></i><i style="position:absolute;left:72px;top:20.2px;width:2px;height:1.7px;background:#808080;opacity:0.21"></i>
<i style="position:absolute;left:0px;top:22.2px;width:2px;height:1.7px;background:#808080;opacity:0.21"></i><i style="position:absolute;left:2px;top:22.2px;width:13px;height:1.7px;background:#4ec9b0;opacity:0.38"></i><i style="position:absolute;left:15px;top:22.2px;width:1px;height:1.7px;background:#808080;opacity:0.21"></i><i style="position:absolute;left:16px;top:22.2px;width:1px;height:1.7px;background:#d4d4d4;opacity:0.21"></i><i style="position:absolute;left:18px;top:22.2px;width:8px;height:1.7px;background:#9cdcfe;opacity:0.38"></i><i style="position:absolute;left:26px;top:22.2px;width:1px;height:1.7px;background:#d4d4d4;opacity:0.21"></i><i style="position:absolute;left:27px;top:22.2px;width:14px;height:1.7px;background:#dcdcaa;opacity:0.38"></i><i style="position:absolute;left:41px;top:22.2px;width:1px;height:1.7px;background:#d4d4d4;opacity:0.21"></i><i style="position:absolute;left:42px;top:22.2px;width:6px;height:1.7px;background:#ce9178;opacity:0.38"></i><i style="position:absolute;left:48px;top:22.2px;width:3px;height:1.7px;background:#d4d4d4;opacity:0.38"></i>
<i style="position:absolute;left:1px;top:24.2px;width:1px;height:1.7px;background:#d4d4d4;opacity:0.21"></i>

</div>
<div class="abs" style="left:1134px;top:0;width:14px;height:442px;background:#424242"></div>
<div class="abs" style="left:1134px;top:94px;width:14px;height:2px;background:#a0a0a0"></div>
</div>
<div id="status">
<svg class="abs" style="left:15px;top:3.5px" width="15" height="15" viewBox="0 0 16 16" fill="none" stroke="#fff" stroke-width="1.2"><circle cx="8" cy="8" r="6.5"/><path d="M5.3 5.3L10.7 10.7M10.7 5.3L5.3 10.7"/></svg>
<span class="t" style="left:33px">0</span>
<svg class="abs" style="left:42px;top:3.5px" width="15" height="15" viewBox="0 0 16 16" fill="none" stroke="#fff" stroke-width="1.2" stroke-linejoin="round"><path d="M8 1.8L14.8 14H1.2Z"/><path d="M8 6V10M8 11.3V12.6" stroke-width="1.4"/></svg>
<span class="t" style="left:58.7px">0</span>
<span class="t" style="left:82px;letter-spacing:-.22px">{..} : Scanning..</span>
<span class="t" style="left:1012.8px">Ln 8, Col 1</span>
<span class="t" style="left:1083.2px;letter-spacing:-.2px">Spaces: 4</span>
<span class="t" style="left:1148.3px">UTF-8</span>
<span class="t" style="left:1196.3px;transform-origin:0 0;transform:scaleX(.87)">CRLF</span>
<span class="t" style="left:1237.9px">JavaScript</span>
<svg class="abs" style="left:1306.2px;top:3.5px" width="15" height="15" viewBox="0 0 16 16" fill="none" stroke="#fff" stroke-width="1.2"><circle cx="8" cy="8" r="6.3"/><path d="M4.8 9.3A3.4 3.4 0 0 0 11.2 9.3"/><circle cx="5.7" cy="6.3" r=".9" fill="#fff" stroke="none"/><circle cx="10.3" cy="6.3" r=".9" fill="#fff" stroke="none"/></svg>
<svg class="abs" style="left:1337.2px;top:3.5px" width="15" height="15" viewBox="0 0 16 16" fill="none" stroke="#fff" stroke-width="1.2" stroke-linejoin="round"><path d="M3 11.5V10.5C4.2 9.5 4.2 8 4.2 6.5A3.8 3.8 0 0 1 11.8 6.5C11.8 8 11.8 9.5 13 10.5V11.5Z"/><path d="M6.5 13.2A1.6 1.6 0 0 0 9.5 13.2"/></svg>
</div>
<div id="task">
<div class="abs" style="left:0;top:0;width:1366px;height:40px;background:linear-gradient(90deg,#0f1318 0,#11161c 385px,#5f6872 410px,#a3b2c3 445px,#a6b5c7 1135px,#56747a 1152px,#4f6d72 1300px,#2a3c3f 1322px,#060809 1345px)"></div>
<div class="abs" style="left:0;top:0;width:1366px;height:40px;background:linear-gradient(180deg,rgba(255,255,255,.06) 0,rgba(255,255,255,0) 45%,rgba(0,0,0,.12) 100%)"></div>
<div class="abs" style="left:0;top:0;width:1366px;height:1px;background:rgba(255,255,255,.28)"></div>
<svg class="abs" style="left:6.4px;top:1px" width="42" height="42" viewBox="0 0 42 42"><defs><radialGradient id="orb" cx=".5" cy=".85" r=".9"><stop offset="0" stop-color="#4fd0ff"/><stop offset=".35" stop-color="#1c7fc4"/><stop offset=".75" stop-color="#164a7e"/><stop offset="1" stop-color="#5d8fb8"/></radialGradient><linearGradient id="gl" x1="0" y1="0" x2="0" y2="1"><stop offset="0" stop-color="#fff" stop-opacity=".75"/><stop offset="1" stop-color="#fff" stop-opacity=".1"/></linearGradient></defs>
<circle cx="21" cy="21" r="19.5" fill="url(#orb)" stroke="#8fb6d6" stroke-opacity=".7" stroke-width="1.2"/>
<path d="M3.5 19A17.5 17.5 0 0 1 38.5 19C30 24 12 24 3.5 19Z" fill="url(#gl)" opacity=".55"/>
<g transform="translate(3.4 -2.2) translate(19 20) scale(1.17) translate(-19 -20)"><path d="M12.5 12.5C15 11 17.500000 11.5 19.5 13L18 20C16 18.600000 13.5 18.3 11 19.500000Z" fill="#f26a21"/>
<path d="M21 13.3C23.500000 14.5 26 14.500000 28.500000 13L27 20C24.5 21.4 22 21.2 19.5 20.200000Z" fill="#8cc63f"/>
<path d="M10.600000 21.2C13 20 15.5 20.300000 17.600000 21.700000L16 28.600000C14 27.3 11.5 27 9 28.200000Z" fill="#2aa5e8"/>
<path d="M19.200000 22C21.600000 23 24 23 26.600000 21.600000L25 28.500000C22.600000 29.800000 20 29.700000 17.600000 28.800000Z" fill="#fcc20e"/></g>
</svg>
<svg class="abs" style="left:68.3px;top:3.6px" width="34" height="32" viewBox="0 0 34 32"><path d="M1 6.5Q1 4.500000 3 4.5H12L14 7H31Q33 7 33 9V28H1Z" fill="#f3d27a" stroke="#c9a344" stroke-width=".8"/><rect x="3" y="2.5" width="4" height="3" fill="#3fae49"/><rect x="12" y="5" width="4" height="3" fill="#d8523a"/><rect x="20" y="6.5" width="4" height="3" fill="#5aa0d8"/><rect x="24" y="8" width="8" height="3" fill="#fff" opacity=".8"/><path d="M1 11H33V28H1Z" fill="#f7e09a"/><path d="M7 17.500000H27L29 30H5Z" fill="#8cc3ea" stroke="#5b9bd0" stroke-width=".8"/><rect x="10" y="24" width="14" height="6.5" fill="#f7e09a"/></svg>
<svg class="abs" style="left:124.1px;top:3.5px" width="32" height="32" viewBox="-16 -16 32 32"><circle r="15.5" fill="#fbc116"/><path d="M0 0L-13.42 -7.75A15.5 15.5 0 0 1 13.42 -7.75Z" fill="#e33b2e"/><path d="M0 -7.750000H13.42A15.5 15.5 0 0 0 -13.42 -7.75L-6.7 3.9Z" fill="#e33b2e"/><path d="M-13.42 -7.75A15.5 15.5 0 0 0 0 15.500000L6.7 3.900000H-6.7Z" fill="#2da94f"/><path d="M0 15.5A15.5 15.5 0 0 0 13.42 -7.75H0L6.7 3.9Z" fill="#fbc116"/><circle r="7.2" fill="#fff"/><circle r="5.7" fill="#4285f4"/></svg>
<div class="tb dk" style="left:170.0px;width:90.2px"></div><div class="tb dk" style="left:260.6px;width:90.2px"></div><div class="tb dk2" style="left:351.1px;width:89.6px"></div><div class="tb lt" style="left:441.1px;width:89.6px"></div><div class="tb lt" style="left:534.7px;width:89.6px"></div><div class="tb ac" style="left:628.1px;width:88.2px"></div><div class="tb lt" style="left:720.4px;width:87.7px"></div><div class="tb lt" style="left:811.9px;width:88.0px"></div><div class="tb lt" style="left:903.9px;width:87.9px"></div>
<svg class="abs" style="left:176.1px;top:4px" width="32" height="32" viewBox="0 0 32 32"><defs><linearGradient id="og180" x1="0" y1="0" x2="0" y2="1"><stop offset="0" stop-color="#ff3340"/><stop offset="1" stop-color="#c4081a"/></linearGradient></defs><path fill-rule="evenodd" fill="url(#og180)" d="M16 .5A15.3 15.5 0 1 0 16 31.500001A15.3 15.5 0 1 0 16 .5ZM16 4.6C21.3 4.6 24.2 10 24.2 16S21.3 27.4 16 27.4S7.8 22 7.8 16S10.7 4.6 16 4.6Z"/></svg>
<svg class="abs" style="left:266.6px;top:4px" width="32" height="32" viewBox="0 0 32 32"><defs><linearGradient id="og264" x1="0" y1="0" x2="0" y2="1"><stop offset="0" stop-color="#ff3340"/><stop offset="1" stop-color="#c4081a"/></linearGradient></defs><path fill-rule="evenodd" fill="url(#og264)" d="M16 .5A15.3 15.5 0 1 0 16 31.500001A15.3 15.5 0 1 0 16 .5ZM16 4.6C21.3 4.6 24.2 10 24.2 16S21.3 27.4 16 27.4S7.8 22 7.8 16S10.7 4.6 16 4.6Z"/></svg>
<svg class="abs" style="left:356.8px;top:4px" width="32" height="32" viewBox="0 0 32 32"><defs><linearGradient id="og349" x1="0" y1="0" x2="0" y2="1"><stop offset="0" stop-color="#ff3340"/><stop offset="1" stop-color="#c4081a"/></linearGradient></defs><path fill-rule="evenodd" fill="url(#og349)" d="M16 .5A15.3 15.5 0 1 0 16 31.500001A15.3 15.5 0 1 0 16 .5ZM16 4.6C21.3 4.6 24.2 10 24.2 16S21.3 27.4 16 27.4S7.8 22 7.8 16S10.7 4.6 16 4.6Z"/></svg>
<svg class="abs" style="left:446.9px;top:4px" width="32" height="32" viewBox="0 0 32 32"><defs><linearGradient id="og433" x1="0" y1="0" x2="0" y2="1"><stop offset="0" stop-color="#ff3340"/><stop offset="1" stop-color="#c4081a"/></linearGradient></defs><path fill-rule="evenodd" fill="url(#og433)" d="M16 .5A15.3 15.5 0 1 0 16 31.500001A15.3 15.5 0 1 0 16 .5ZM16 4.6C21.3 4.6 24.2 10 24.2 16S21.3 27.4 16 27.4S7.8 22 7.8 16S10.7 4.6 16 4.6Z"/></svg>
<span class="tl" style="left:211.0px">33. Ур...</span><span class="tl" style="left:303.5px">React ...</span><span class="tl" style="left:393.8px">Изме...</span><span class="tl" style="left:483.4px">Изме...</span><span class="tl" style="left:577.7px">npm</span><span class="tl" style="left:670.5px">rende...</span><span class="tl" style="left:763.0px">Teleg...</span><span class="tl" style="left:854.4px">Прои...</span><span class="tl" style="left:946.1px">Дисп...</span>
<div class="abs" style="left:541.8px;top:7px;width:28.3px;height:23px;background:#000;border:1px solid #8a8a8a;border-top:2.5px solid #9c9c9c"><span class="abs" style="left:2.5px;top:3px;font-family:'Liberation Mono',monospace;font-size:9px;font-weight:bold;color:#ddd;line-height:8px;letter-spacing:-.5px">C:\_</span></div>
<svg class="abs" style="left:632.4px;top:2.8px" width="35" height="35" viewBox="0 0 100 100"><path d="M72 4L95 14V86L72 96L33 60L14 75L5 70L26 50L5 30L14 25L33 40ZM72 29L46 50L72 71Z" fill="#1585d6" fill-rule="evenodd"/><path d="M72 4L95 14V86L72 96Z" fill="#2aa3f2"/><path d="M72 4L33 40L46 50L72 29ZM72 96L33 60L46 50L72 71Z" fill="#1f96e8"/></svg>
<svg class="abs" style="left:727.0px;top:4.5px" width="30" height="30" viewBox="0 0 30 30"><circle cx="15" cy="15" r="14.5" fill="#2b9fd9"/><path d="M6.5 14.600000L22 8.5L19.5 21.500000L15 18.200000L12.8 20.400000L12.300000 16.700000Z" fill="#fff"/><path d="M12.300000 16.700000L20 10.500000L14 17.600000L12.800000 20.400000Z" fill="#c8daea"/></svg>
<svg class="abs" style="left:819.1px;top:8px" width="28" height="24" viewBox="0 0 28 24"><rect x="4.5" y="0.5" width="22" height="22" fill="#b9ddf5" stroke="#6fb1e0"/><rect x="2.5" y="0.5" width="22" height="22" fill="#b9ddf5" stroke="#6fb1e0"/><rect x="0.5" y="0.5" width="22" height="22" fill="#a9d5f3" stroke="#6fb1e0"/><circle cx="11.5" cy="11.5" r="8.3" fill="#f47b1f"/><path d="M8.800000 6.500000L16.500000 11.500000L8.8 16.500000Z" fill="#fff"/></svg>
<svg class="abs" style="left:910.3px;top:3.5px" width="32" height="33" viewBox="0 0 32 33"><path d="M1 11.500000H7L15.500000 2.500000V30.500000L7 21.500000H1Z" fill="#e8623a" stroke="#8a2c12" stroke-width="1"/><path d="M19 10Q23 16.500000 19 23" fill="none" stroke="#6d2a18" stroke-width="1.8"/><path d="M23.500000 6Q30 16.500000 23.500000 27" fill="none" stroke="#6d2a18" stroke-width="1.800000"/></svg>
<span class="abs" style="left:1005.8px;top:10.8px;font-size:12px;color:#fff;line-height:14px">EN</span>
<div class="abs" style="left:1037.8px;top:14px;width:14px;height:13px;background:#8a8a88;border:1.2px solid #d8d8d8;box-shadow:0 0 0 1px #555"><div class="abs" style="left:0;bottom:0;width:100%;height:3.5px;border-top:1px solid #555;background:#a5a5a3"></div><div class="abs" style="left:6px;bottom:0;width:1px;height:3.5px;background:#555"></div></div>
<svg class="abs" style="left:1061.3px;top:14px" width="15" height="15" viewBox="0 0 15 15"><rect x="1" y="1.5" width="8" height="6" rx="2.5" fill="#e8e337" stroke="#111" stroke-width="1.2" transform="rotate(30 5 4.5)"/><rect x="6" y="7" width="7" height="5.5" rx="2.5" fill="#39c43b" stroke="#111" stroke-width="1.200000" transform="rotate(30 9.5 9.7)"/></svg>
<svg class="abs" style="left:1084.5px;top:13px" width="16" height="16" viewBox="-16 -16 32 32"><circle r="15.5" fill="#fbc116"/><path d="M0 0L-13.42 -7.75A15.5 15.5 0 0 1 13.42 -7.75Z" fill="#e33b2e"/><path d="M0 -7.750000H13.42A15.5 15.5 0 0 0 -13.42 -7.75L-6.7 3.9Z" fill="#e33b2e"/><path d="M-13.42 -7.75A15.5 15.5 0 0 0 0 15.500000L6.7 3.900000H-6.7Z" fill="#2da94f"/><path d="M0 15.5A15.5 15.5 0 0 0 13.42 -7.75H0L6.7 3.9Z" fill="#fbc116"/><circle r="7.2" fill="#fff"/><circle r="5.7" fill="#4285f4"/></svg>
<svg class="abs" style="left:1107.7px;top:13px" width="16" height="16" viewBox="0 0 16 16"><rect x="3.5" y="1" width="10" height="13" fill="#e9e9e9" stroke="#888" stroke-width=".6"/><rect x="0" y="5" width="9" height="10" fill="#d02020"/><path d="M6 2.500000V6M10.500000 2.500000V6" stroke="#555" stroke-width="1.400000"/><rect x="5" y="6" width="6.5" height="4.5" fill="#fff" stroke="#666" stroke-width=".6"/></svg>
<svg class="abs" style="left:1131.8px;top:13px" width="16" height="16" viewBox="0 0 16 16"><path d="M.5 5.500000H3.500000L8 1.500000V14.500000L3.500000 10.500000H.5Z" fill="#f4f4f4" stroke="#8a8a8a" stroke-width=".6"/><path d="M10 5Q12 8 10 11M12.300000 3Q15.500000 8 12.300000 13" fill="none" stroke="#e8e8e8" stroke-width="1.200000"/></svg>
<svg class="abs" style="left:1180.1px;top:12px" width="16" height="17" viewBox="0 0 16 17"><rect x=".5" y=".5" width="15" height="16" rx="2" fill="#2f8fdd"/><path d="M.5 12.500000L6 9.500000L15.500000 16.500000H2.500000Q.5 16.500000 .5 14.500000Z" fill="#f2c534"/><path d="M3.500000 3H12.500000V9H3.500000Z" fill="none" stroke="#fff" stroke-width="1.100000"/><path d="M6 4.500000L10 8M10 4.500000L6 8" stroke="#fff" stroke-width="1"/><path d="M8 11.500000H13M8 13.500000H13" stroke="#fff" stroke-width="1"/></svg>
<svg class="abs" style="left:1228.3px;top:12.5px" width="16" height="16" viewBox="0 0 16 16"><rect width="16" height="16" rx="2" fill="#252a25"/><path d="M2 8Q5 3.500000 10 4.500000V6Q6 5.500000 4 8Q6 11 10 10.500000V12Q5 12.500000 2 8Z" fill="#7ab51d"/><path d="M5.500000 8Q7 6.500000 9 7V9.500000Q7 9.800000 5.500000 8Z" fill="#7ab51d"/><rect x="12" y="4" width="2" height="6" fill="#f0d820"/><rect x="12" y="11" width="2" height="2" fill="#f0d820"/></svg>
<svg class="abs" style="left:1252.1px;top:12.5px" width="16.5" height="16.5" viewBox="0 0 30 30"><circle cx="15" cy="15" r="14.5" fill="#36a8e4"/><path d="M6.500000 14.600000L22 8.500000L19.500000 21.500000L15 18.200000L12.800000 20.400000L12.300000 16.700000Z" fill="#fff"/></svg>
<div class="abs" style="left:1279.8px;top:4.3px;width:66.2px;text-align:center;color:#fff;font-size:11.1px;line-height:16.7px">21:51<br>25.11.2019</div>
<div class="abs" style="left:1352.7px;top:1px;width:16px;height:40px;border:1px solid rgba(255,255,255,.55);border-right:0;background:linear-gradient(180deg,rgba(255,255,255,.18),rgba(255,255,255,.03));box-shadow:-1px 0 0 rgba(0,0,0,.6)"></div>
</div>
</div>
</body>
</html>
